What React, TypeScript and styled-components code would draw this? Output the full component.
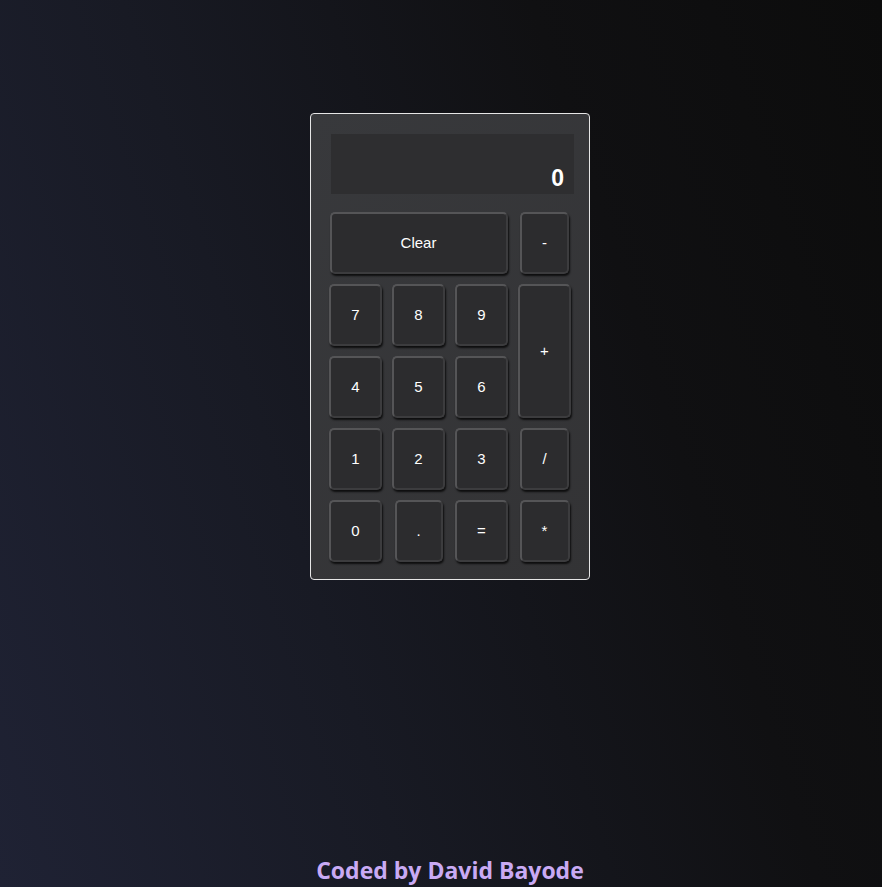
import React from "react";
import styled, { createGlobalStyle } from "styled-components";

const Global = createGlobalStyle`
  html, body {
    margin: 0;
    padding: 0;
    overflow: hidden;
    background: #0d0d0e;
  }
  * { box-sizing: border-box; }
`;

const Page = styled.div`
  width: 882px;
  height: 887px;
  overflow: hidden;
  background: linear-gradient(72deg, #1f2234 0%, #181a24 35%, #101012 70%, #0c0c0c 100%);
`;

const Column = styled.main`
  width: 900px;
  height: 887px;
  display: flex;
  flex-direction: column;
  align-items: center;
`;

const Calculator = styled.div`
  margin-top: 113px;
  width: 280px;
  height: 467px;
  border: 1px solid #e6e6e6;
  border-radius: 4px;
  background: linear-gradient(135deg, #38393c 0%, #333335 100%);
  padding: 20px 18px 17px 18px;
  display: flex;
  flex-direction: column;
  gap: 18px;
`;

const Display = styled.div`
  width: 243px;
  height: 60px;
  margin-left: 2px;
  background: #2e2e30;
  display: flex;
  align-items: flex-end;
  justify-content: flex-end;
  padding: 0 10px 2px 0;
  color: #ffffff;
  font-family: "Liberation Sans", Arial, sans-serif;
  font-weight: 700;
  font-size: 23px;
`;

const Keys = styled.div`
  display: grid;
  grid-template-columns: repeat(4, 53px);
  grid-auto-rows: 62px;
  column-gap: 10px;
  row-gap: 10px;
`;

const Key = styled.button<{ $w?: number; $span?: number; $rows?: number }>`
  width: ${(p) => (p.$w ? `${p.$w}px` : "53px")};
  justify-self: center;
  grid-column: ${(p) => (p.$span ? `span ${p.$span}` : "auto")};
  grid-row: ${(p) => (p.$rows ? `span ${p.$rows}` : "auto")};
  height: 100%;
  background: #2c2c2e;
  color: #ffffff;
  font-family: "Liberation Sans", Arial, sans-serif;
  font-size: 15px;
  line-height: 15px;
  border: 2px solid #555557;
  border-right-color: #3c3c3e;
  border-bottom-color: #3c3c3e;
  border-radius: 5px;
  box-shadow: 1px 2px 2px rgba(0, 0, 0, 0.75);
  padding: 0 0 2px 0;
  cursor: pointer;
`;

const Footer = styled.footer`
  margin-top: auto;
  height: 34px;
  font-family: "Open Sans", "Noto Sans", sans-serif;
  font-weight: 700;
  font-size: 23px;
  color: #c9aaf4;
  line-height: 34px;
`;

export default function App() {
  return (
    <>
      <Global />
      <Page>
        <Column>
          <Calculator>
            <Display>0</Display>
            <Keys>
              <Key $span={3} $w={178}>Clear</Key>
              <Key $w={49}>-</Key>
              <Key>7</Key>
              <Key>8</Key>
              <Key>9</Key>
              <Key $rows={2}>+</Key>
              <Key>4</Key>
              <Key>5</Key>
              <Key>6</Key>
              <Key>1</Key>
              <Key>2</Key>
              <Key>3</Key>
              <Key $w={49}>/</Key>
              <Key>0</Key>
              <Key $w={48}>.</Key>
              <Key>=</Key>
              <Key $w={50}>*</Key>
            </Keys>
          </Calculator>
          <Footer>Coded by David Bayode</Footer>
        </Column>
      </Page>
    </>
  );
}
